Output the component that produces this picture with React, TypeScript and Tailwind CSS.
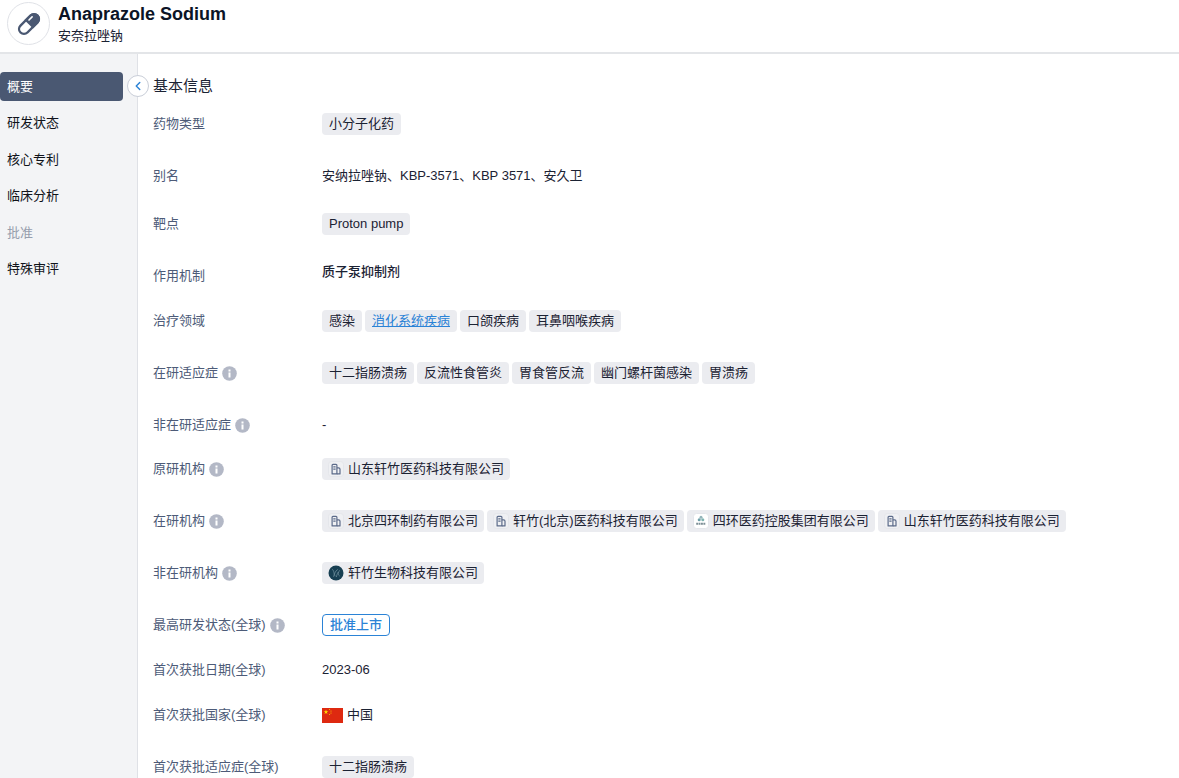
import type { ReactNode } from 'react';
import { ChevronLeft } from 'lucide-react';

type Tag = { label: string; icon?: 'building' | 'sihuan' | 'xuanzhu'; active?: boolean };

interface InfoRow {
  label: string;
  hint?: boolean;
  height: string;
  value: ReactNode;
}

const NAV_ITEMS = [
  { label: '概要', href: '#overview', state: 'active' },
  { label: '研发状态', href: '#status', state: 'normal' },
  { label: '核心专利', href: '#patents', state: 'normal' },
  { label: '临床分析', href: '#clinical', state: 'normal' },
  { label: '批准', href: '#approval', state: 'muted' },
  { label: '特殊审评', href: '#review', state: 'normal' },
] as const;

const NAV_STYLES = {
  active: 'bg-[#4a5872] text-white',
  normal: 'text-[#10131a] hover:bg-gray-200',
  muted: 'text-[#979ead]',
};

function PillIcon() {
  return (
    <svg width="26" height="26" viewBox="0 0 26 26" aria-hidden="true">
      <g transform="rotate(-45 13 13)">
        <rect x="1" y="8.1" width="24" height="9.8" rx="4.9" fill="#fff" stroke="#4a5872" strokeWidth="2.4" />
        <path d="M12.6 6.9h7.5a6.1 6.1 0 0 1 0 12.2h-7.5z" fill="#4a5872" />
        <path d="M15.8 10.2h4.4" stroke="#fff" strokeWidth="1.6" strokeLinecap="round" />
      </g>
    </svg>
  );
}

function InfoIcon() {
  return (
    <svg width="15" height="15" viewBox="0 0 15 15" className="shrink-0" aria-hidden="true">
      <circle cx="7.5" cy="7.5" r="7.3" fill="#b3b8c6" />
      <rect x="6.5" y="3.5" width="2" height="2" fill="#fff" />
      <rect x="6.5" y="6.5" width="2" height="5" fill="#fff" />
    </svg>
  );
}

function BuildingIcon() {
  return (
    <svg width="16" height="16" viewBox="0 0 16 16" className="shrink-0" aria-hidden="true">
      <rect x="0.5" y="0.5" width="15" height="15" rx="3" fill="#eff0f3" stroke="#e4e6eb" />
      <g fill="none" stroke="#5c6b8a" strokeWidth="1.2" strokeLinejoin="round">
        <path d="M4.1 12.9V4.3q0-.9.9-.9h3q.9 0 .9.9v8.6z" />
        <path d="M8.9 6.9h1.7q1.4 0 1.4 1.4v4.6H8.9" />
        <path d="M5.3 5.8h2.3M5.3 8.2h2.3" />
      </g>
    </svg>
  );
}

function SihuanLogo() {
  return (
    <svg width="16" height="16" viewBox="0 0 16 16" className="shrink-0" aria-hidden="true">
      <rect x="0.5" y="0.5" width="15" height="15" rx="3" fill="#fff" stroke="#e4e6eb" />
      <circle cx="8" cy="4.2" r="1.5" fill="#93b5ba" />
      <circle cx="6.2" cy="6.8" r="1.5" fill="#6d9fa9" />
      <circle cx="9.8" cy="6.8" r="1.5" fill="#7fb3b0" />
      <path d="M3.2 10.8h9.6" stroke="#7d8f96" strokeWidth="2" strokeDasharray="1.9 0.5" />
    </svg>
  );
}

function XuanzhuLogo() {
  return (
    <svg width="16" height="16" viewBox="0 0 16 16" className="shrink-0" aria-hidden="true">
      <circle cx="8" cy="8" r="7.5" fill="#173f52" />
      <path
        d="M4 4.4c2.4.2 1.6 6.2 3.4 6.6M5.6 11.8c.6-2.2 1.6-6 4.2-7.4M8.4 12c.4-2.2 1.4-5.2 3.6-6.6M10.4 7c-.2 1.8 0 3.4 1.2 4"
        fill="none"
        stroke="#6d8d9a"
        strokeWidth="0.8"
      />
    </svg>
  );
}

const TAG_ICONS = {
  building: BuildingIcon,
  sihuan: SihuanLogo,
  xuanzhu: XuanzhuLogo,
};

function TagList({ tags }: { tags: Tag[] }) {
  return (
    <div className="flex flex-wrap gap-[3px]">
      {tags.map(({ label, icon, active }) => {
        const Icon = icon ? TAG_ICONS[icon] : null;
        return (
          <a
            key={label}
            href="#tag"
            className={`flex h-[22px] items-center gap-1 rounded bg-[#ebecf0] ${Icon ? 'px-1.5' : 'px-[7px]'} ${
              active ? 'text-[#2b83d6] underline' : 'text-[#1b2233]'
            }`}
          >
            {Icon && <Icon />}
            <span>{label}</span>
          </a>
        );
      })}
    </div>
  );
}

function ChinaFlag() {
  return (
    <svg width="21" height="15" viewBox="0 0 21 15" aria-hidden="true">
      <rect width="21" height="15" fill="#de2910" />
      <path d="M4 1.6l.6 1.6h1.7L4.9 4.3l.6 1.7L4 5 2.5 6l.6-1.7-1.4-1.1h1.7z" fill="#ffde00" />
      <g fill="#ffde00">
        <circle cx="7.6" cy="1.5" r="0.5" />
        <circle cx="9" cy="3" r="0.5" />
        <circle cx="9" cy="5" r="0.5" />
        <circle cx="7.6" cy="6.4" r="0.5" />
      </g>
    </svg>
  );
}

const ROWS: InfoRow[] = [
  { label: '药物类型', height: 'min-h-[52px]', value: <TagList tags={[{ label: '小分子化药' }]} /> },
  { label: '别名', height: 'min-h-[48px]', value: '安纳拉唑钠、KBP-3571、KBP 3571、安久卫' },
  { label: '靶点', height: 'min-h-[52px]', value: <TagList tags={[{ label: 'Proton pump' }]} /> },
  { label: '作用机制', height: 'min-h-[45px]', value: <p className="-mt-1 font-medium">质子泵抑制剂</p> },
  {
    label: '治疗领域',
    height: 'min-h-[52px]',
    value: (
      <TagList
        tags={[{ label: '感染' }, { label: '消化系统疾病', active: true }, { label: '口颌疾病' }, { label: '耳鼻咽喉疾病' }]}
      />
    ),
  },
  {
    label: '在研适应症',
    hint: true,
    height: 'min-h-[52px]',
    value: (
      <TagList
        tags={[
          { label: '十二指肠溃疡' },
          { label: '反流性食管炎' },
          { label: '胃食管反流' },
          { label: '幽门螺杆菌感染' },
          { label: '胃溃疡' },
        ]}
      />
    ),
  },
  { label: '非在研适应症', hint: true, height: 'min-h-[44px]', value: '-' },
  {
    label: '原研机构',
    hint: true,
    height: 'min-h-[52px]',
    value: <TagList tags={[{ label: '山东轩竹医药科技有限公司', icon: 'building' }]} />,
  },
  {
    label: '在研机构',
    hint: true,
    height: 'min-h-[52px]',
    value: (
      <TagList
        tags={[
          { label: '北京四环制药有限公司', icon: 'building' },
          { label: '轩竹(北京)医药科技有限公司', icon: 'building' },
          { label: '四环医药控股集团有限公司', icon: 'sihuan' },
          { label: '山东轩竹医药科技有限公司', icon: 'building' },
        ]}
      />
    ),
  },
  {
    label: '非在研机构',
    hint: true,
    height: 'min-h-[52px]',
    value: <TagList tags={[{ label: '轩竹生物科技有限公司', icon: 'xuanzhu' }]} />,
  },
  {
    label: '最高研发状态(全球)',
    hint: true,
    height: 'min-h-[45px]',
    value: (
      <span className="flex h-[22px] w-fit items-center rounded border border-[#2b83d6] px-[7px] font-medium text-[#2b83d6]">
        批准上市
      </span>
    ),
  },
  { label: '首次获批日期(全球)', height: 'min-h-[45px]', value: '2023-06' },
  {
    label: '首次获批国家(全球)',
    height: 'min-h-[52px]',
    value: (
      <span className="flex items-center gap-1">
        <ChinaFlag />
        中国
      </span>
    ),
  },
  { label: '首次获批适应症(全球)', height: 'min-h-[22px]', value: <TagList tags={[{ label: '十二指肠溃疡' }]} /> },
];

export default function App() {
  return (
    <div className="flex min-h-screen flex-col bg-white font-['Liberation_Sans','Noto_Sans_CJK_SC',sans-serif] text-[13px] leading-[22px] text-[#1b2233]">
      <header className="flex h-[54px] items-start gap-2 border-b-2 border-[#e3e5e8] pl-[7px]">
        <div className="mt-0.5 flex size-[43px] shrink-0 items-center justify-center rounded-full border border-[#e0e2e7]">
          <PillIcon />
        </div>
        <div className="pt-[3px]">
          <h1 className="text-[18px] leading-[22px] font-bold text-[#0b1426]">Anaprazole Sodium</h1>
          <p>安奈拉唑钠</p>
        </div>
      </header>

      <div className="flex flex-1">
        <aside className="relative w-[138px] shrink-0 border-r border-[#dfe1e6] bg-[#f3f4f6] pt-[18px]">
          <nav className="flex h-[212px] flex-col justify-between pr-[14px]">
            {NAV_ITEMS.map(({ label, href, state }) => (
              <a key={href} href={href} className={`flex h-[29px] items-center rounded px-[7px] ${NAV_STYLES[state]}`}>
                {label}
              </a>
            ))}
          </nav>
          {/* Collapse handle sits on the sidebar border */}
          <button
            type="button"
            aria-label="收起侧栏"
            className="absolute top-[21px] -right-3 flex size-[22px] items-center justify-center rounded-full border border-[#c9ced8] bg-white text-[#2b83d6]"
          >
            <ChevronLeft size={14} strokeWidth={2.5} />
          </button>
        </aside>

        <main className="min-w-0 flex-1 pt-[21px] pl-[15px]">
          <h2 className="mb-4 text-[15px] leading-[22px]">基本信息</h2>
          <dl>
            {ROWS.map(({ label, hint, height, value }) => (
              <div key={label} className={`flex items-start ${height}`}>
                <dt className="flex w-[169px] shrink-0 items-center gap-1 text-[#4d5b78]">
                  {label}
                  {hint && <InfoIcon />}
                </dt>
                <dd className="min-w-0 flex-1">{value}</dd>
              </div>
            ))}
          </dl>
        </main>
      </div>
    </div>
  );
}
